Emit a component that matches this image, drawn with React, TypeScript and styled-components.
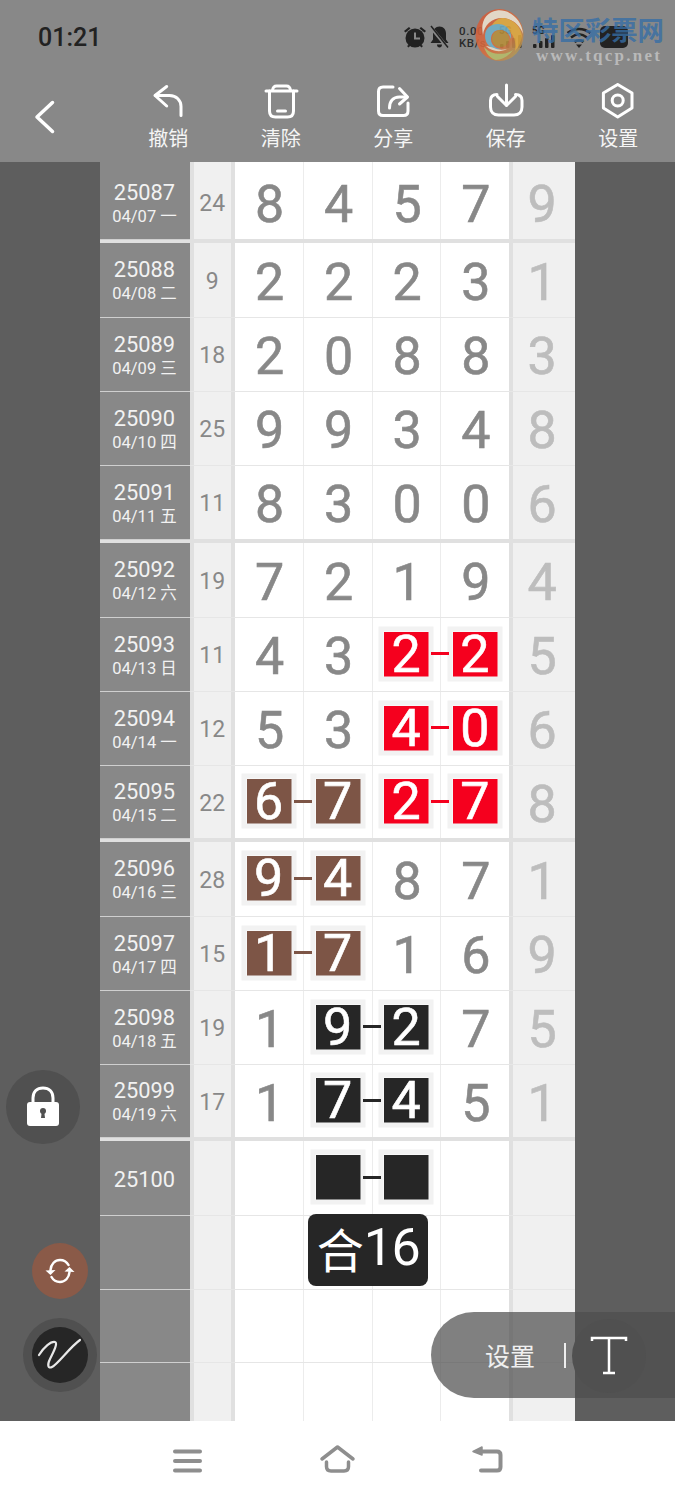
import React from "react";
import styled, { createGlobalStyle } from "styled-components";

const Global = createGlobalStyle`
  html, body { margin: 0; padding: 0; background: #fff; }
  * { box-sizing: border-box; }
  body { font-family: Roboto, "Noto Sans CJK SC", sans-serif; }
`;

const Page = styled.div`
  position: relative;
  width: 675px;
  height: 1500px;
  overflow: hidden;
  display: flex;
  flex-direction: column;
  background: #fff;
`;

const Header = styled.header`
  height: 162px;
  flex: none;
  background: #888888;
  display: flex;
  flex-direction: column;
`;

const StatusBar = styled.div`
  height: 83px;
  flex: none;
  display: flex;
  align-items: flex-start;
  justify-content: space-between;
  padding: 22px 47px 0 38px;
`;

const Time = styled.span`
  font: 500 25px/30px Roboto, sans-serif;
  color: #222;
  margin-top: 1px;
`;

const StatusIcons = styled.div`
  display: flex;
  align-items: center;
  height: 30px;
`;

const Speed = styled.div`
  width: 30px;
  margin: 0 0 0 10px;
  font: 500 11.5px/12px Roboto, sans-serif;
  color: #2a2a2a;
  letter-spacing: 0.6px;
  white-space: nowrap;
`;

const Signal = styled.div<{ $gap: number }>`
  position: relative;
  width: 26px;
  height: 24px;
  margin-left: ${(p) => p.$gap}px;
`;

const SignalTag = styled.span`
  position: absolute;
  left: 0;
  top: 0;
  font: 700 10px/11px Roboto, sans-serif;
  color: #222;
`;

const Toolbar = styled.div`
  display: flex;
  flex: 1;
  align-items: flex-start;
`;

const BackButton = styled.div`
  width: 112px;
  flex: none;
`;

const ToolItem = styled.div`
  width: 112.5px;
  flex: none;
  display: flex;
  flex-direction: column;
  align-items: center;
`;

const ToolLabel = styled.span`
  font: 400 20px/24px "Noto Sans CJK SC", sans-serif;
  color: #f5f5f5;
  margin-top: 6px;
`;

const Body = styled.main`
  height: 1259px;
  flex: none;
  display: flex;
  background: #5e5e5e;
  overflow: hidden;
`;

const Gutter = styled.div`
  width: 100px;
  flex: none;
`;

const Sheet = styled.div`
  width: 475px;
  flex: none;
  display: flex;
  flex-direction: column;
`;

const Row = styled.div<{ $h: number; $end?: boolean }>`
  flex: none;
  height: ${(p) => p.$h}px;
  display: grid;
  grid-template-columns: 90px 44.5px 69px 69px 68px 68.5px 66px;
  border-bottom: ${(p) => (p.$end ? "4px solid #e0e0e0" : "1px solid #e6e6e6")};
`;

const IssueCell = styled.div`
  background: #888888;
  color: #f2f2f2;
  display: flex;
  flex-direction: column;
  align-items: center;
  justify-content: center;
  padding: 2px 1px 0 0;
  box-shadow: 0 1px 0 #cfcfcf;
`;

const IssueNo = styled.span`
  font: 400 21.8px/25px Roboto, sans-serif;
`;

const IssueDate = styled.span`
  font: 400 16.5px/23px Roboto, "Noto Sans CJK SC", sans-serif;
  white-space: nowrap;
`;

const SumCell = styled.div`
  background: #f0f0f0;
  border-left: 4px solid #e0e0e0;
  border-right: 4px solid #e0e0e0;
  color: #888;
  font: 400 23px/1 Roboto, sans-serif;
  display: flex;
  align-items: center;
  justify-content: center;
  padding-top: 2px;
`;

const NumCell = styled.div<{ $last?: boolean }>`
  position: relative;
  background: #fff;
  border-right: ${(p) => (p.$last ? "0" : "1px solid #ececec")};
  color: #888;
  font: 400 52px/1 Roboto, sans-serif;
  -webkit-text-stroke: 0.6px currentColor;
  display: flex;
  align-items: center;
  justify-content: center;
  padding: 5px 0 0 2px;
`;

const TailCell = styled.div`
  background: #f0f0f0;
  border-left: 4px solid #e0e0e0;
  color: #bdbdbd;
  font: 400 52px/1 Roboto, sans-serif;
  -webkit-text-stroke: 0.6px currentColor;
  display: flex;
  align-items: center;
  justify-content: center;
  padding: 5px 4px 0 0;
`;

const Mark = styled.div<{ $c: string }>`
  position: absolute;
  left: 50%;
  top: calc(50% - 1px);
  transform: translate(-50%, -50%);
  width: 55px;
  height: 55px;
  border: 5px solid #f2f2f2;
  background: ${(p) => p.$c};
  background-clip: padding-box;
  color: #fff;
  font: 400 52px/46px Roboto, sans-serif;
  -webkit-text-stroke: 0.6px currentColor;
  text-align: center;
`;

const Link = styled.div<{ $c: string }>`
  position: absolute;
  z-index: 2;
  right: -9.5px;
  top: calc(50% - 2.5px);
  width: 18px;
  height: 3px;
  background: ${(p) => p.$c};
`;

const Badge = styled.div`
  position: absolute;
  left: 308px;
  top: 1214px;
  width: 120px;
  height: 72px;
  border-radius: 8px;
  background: #262626;
  color: #fff;
  display: flex;
  align-items: center;
  justify-content: center;
  padding-bottom: 5px;
  font: 400 52px/1 Roboto, "Noto Sans CJK SC", sans-serif;
  letter-spacing: -1.5px;
`;

const BadgeHan = styled.span`
  font: 400 47px/1 "Noto Sans CJK SC", sans-serif;
  letter-spacing: 0;
`;

const RoundBtn = styled.div<{ $x: number; $y: number; $r: number; $c: string }>`
  position: absolute;
  left: ${(p) => p.$x - p.$r}px;
  top: ${(p) => p.$y - p.$r}px;
  width: ${(p) => p.$r * 2}px;
  height: ${(p) => p.$r * 2}px;
  border-radius: 50%;
  background: ${(p) => p.$c};
  display: flex;
  align-items: center;
  justify-content: center;
`;

const Pill = styled.div`
  position: absolute;
  left: 431px;
  top: 1312px;
  width: 244px;
  height: 86px;
  border-radius: 43px 0 0 43px;
  background: rgba(77, 77, 77, 0.714);
  display: flex;
  align-items: center;
  padding-left: 54px;
`;

const PillText = styled.span`
  font: 400 25px/30px "Noto Sans CJK SC", sans-serif;
  color: #f0f0f0;
  white-space: nowrap;
`;

const PillDivider = styled.div`
  width: 2px;
  height: 25px;
  background: #eee;
  margin-left: 29px;
`;

const NavBar = styled.nav`
  height: 79px;
  flex: none;
  background: #fff;
  display: flex;
  align-items: flex-start;
  padding: 20px 0 0 165px;
  gap: 100px;
`;

const Watermark = styled.div`
  position: absolute;
  left: 475px;
  top: 9px;
  width: 195px;
  height: 56px;
  display: flex;
  pointer-events: none;
`;

const LogoMark = styled.svg`
  flex: none;
  opacity: 0.88;
`;

const WatermarkText = styled.div`
  margin-left: 9px;
  display: flex;
  flex-direction: column;
`;

const WatermarkName = styled.span`
  font: 700 26.4px/30px "Noto Sans CJK SC", sans-serif;
  color: rgba(54, 110, 166, 0.8);
  margin: 5px 0 0 -1px;
  white-space: nowrap;
`;

const WatermarkUrl = styled.span`
  font: 700 17px/18px "Liberation Serif", serif;
  color: #b9b9b9;
  letter-spacing: 2.25px;
  margin: 3px 0 0 3px;
  white-space: nowrap;
`;

type N = number | string;
type Mk = { at: number; to?: boolean; c: string };

type RowData = {
  no: string;
  date?: string;
  sum?: number;
  d?: N[];
  tail?: number;
  end?: boolean;
  h: number;
  marks?: Mk[];
};

const RED = "#f5001e";
const BROWN = "#7d5546";
const BLACK = "#262626";

const rows: RowData[] = [
  { no: "25087", date: "04/07 一", sum: 24, d: [8, 4, 5, 7], tail: 9, end: true, h: 77 },
  { no: "25088", date: "04/08 二", sum: 9, d: [2, 2, 2, 3], tail: 1, h: 75 },
  { no: "25089", date: "04/09 三", sum: 18, d: [2, 0, 8, 8], tail: 3, h: 74 },
  { no: "25090", date: "04/10 四", sum: 25, d: [9, 9, 3, 4], tail: 8, h: 74 },
  { no: "25091", date: "04/11 五", sum: 11, d: [8, 3, 0, 0], tail: 6, end: true, h: 77 },
  { no: "25092", date: "04/12 六", sum: 19, d: [7, 2, 1, 9], tail: 4, h: 75 },
  { no: "25093", date: "04/13 日", sum: 11, d: [4, 3, 2, 2], tail: 5, h: 74, marks: [{ at: 2, to: true, c: RED }, { at: 3, c: RED }] },
  { no: "25094", date: "04/14 一", sum: 12, d: [5, 3, 4, 0], tail: 6, h: 74, marks: [{ at: 2, to: true, c: RED }, { at: 3, c: RED }] },
  {
    no: "25095", date: "04/15 二", sum: 22, d: [6, 7, 2, 7], tail: 8, end: true, h: 76,
    marks: [{ at: 0, to: true, c: BROWN }, { at: 1, c: BROWN }, { at: 2, to: true, c: RED }, { at: 3, c: RED }],
  },
  { no: "25096", date: "04/16 三", sum: 28, d: [9, 4, 8, 7], tail: 1, h: 75, marks: [{ at: 0, to: true, c: BROWN }, { at: 1, c: BROWN }] },
  { no: "25097", date: "04/17 四", sum: 15, d: [1, 7, 1, 6], tail: 9, h: 74, marks: [{ at: 0, to: true, c: BROWN }, { at: 1, c: BROWN }] },
  { no: "25098", date: "04/18 五", sum: 19, d: [1, 9, 2, 7], tail: 5, h: 74, marks: [{ at: 1, to: true, c: BLACK }, { at: 2, c: BLACK }] },
  { no: "25099", date: "04/19 六", sum: 17, d: [1, 7, 4, 5], tail: 1, end: true, h: 76, marks: [{ at: 1, to: true, c: BLACK }, { at: 2, c: BLACK }] },
  { no: "25100", d: ["", "", "", ""], h: 75, marks: [{ at: 1, to: true, c: BLACK }, { at: 2, c: BLACK }] },
  { no: "", d: ["", "", "", ""], h: 74 },
  { no: "", d: ["", "", "", ""], h: 73 },
  { no: "", d: ["", "", "", ""], h: 74 },
];

const StrokeIcon = styled.svg`
  display: block;
  fill: none;
  stroke: #fff;
  stroke-width: 3;
  stroke-linecap: round;
  stroke-linejoin: round;
`;

const NavIcon = styled.svg`
  display: block;
  fill: none;
  stroke: #8e8e8e;
  stroke-width: 4;
  stroke-linecap: round;
  stroke-linejoin: round;
`;

const tools: { label: string; icon: React.ReactNode }[] = [
  {
    label: "撤销",
    icon: (
      <StrokeIcon width="40" height="37" viewBox="148 83 40 37">
        <path d="M166.7 86.500 155 95.500l11.700 10.500" />
        <path d="M155.500 95.500h14c7 0 11.500 5 11.500 11v9" />
      </StrokeIcon>
    ),
  },
  {
    label: "清除",
    icon: (
      <StrokeIcon width="40" height="37" viewBox="261 83 40 37">
        <path d="M266 91h31" />
        <path d="M272.500 90.500c.5-3.500 1.500-4.500 4-4.500h10c2.500 0 3.500 1 4 4.500" />
        <path d="M269.500 91v20c0 4 2 6 6 6h12c4 0 6-2 6-6V91" />
        <path d="M277.500 111h8" />
      </StrokeIcon>
    ),
  },
  {
    label: "分享",
    icon: (
      <StrokeIcon width="40" height="37" viewBox="374 83 40 37">
        <path d="M394 87h-10c-3 0-4.500 1.500-4.500 4.500v19.500c0 3 1.500 4.500 4.500 4.500h20.500c3 0 4.500-1.500 4.500-4.500v-8" />
        <path d="M390.500 108c0-6.500 3.500-11 10-11h7.500" />
        <path d="M400.500 88.500 408.500 97l-8 7" />
      </StrokeIcon>
    ),
  },
  {
    label: "保存",
    icon: (
      <StrokeIcon width="40" height="37" viewBox="486 83 40 37">
        <path d="M497 94.500c-4.500 0-6.500 2.500-6.500 6v6.500c0 5 3 8 8 8h15.500c5 0 8-3 8-8v-6.500c0-3.500-2-6-6.500-6" />
        <path d="M506.500 85v20" />
        <path d="m497.500 96.500 9 9 9-9" />
      </StrokeIcon>
    ),
  },
  {
    label: "设置",
    icon: (
      <StrokeIcon width="40" height="37" viewBox="599 83 40 37">
        <path d="M618.700 84.500 633 93v15l-14.300 9-14.300-9V93z" />
        <circle cx="618.700" cy="100.500" r="5.500" />
      </StrokeIcon>
    ),
  },
];

export default function App() {
  return (
    <Page>
      <Global />
      <Header>
        <StatusBar>
          <Time>01:21</Time>
          <StatusIcons>
            <svg width="24" height="24" viewBox="0 0 24 24" fill="#222">
              <circle cx="12" cy="13" r="9.500" />
              <path d="M1 6l5-4 1.500 1.500-5 4zM23 6l-5-4-1.500 1.500 5 4zM4 21l3-2 1 1-2.500 2.500zM20 21l-3-2-1 1 2.500 2.500z" />
              <path d="M12 7.500V13.500h5" fill="none" stroke="#888" strokeWidth="2" />
            </svg>
            <svg width="19" height="24" viewBox="0 0 19 24" style={{ marginLeft: 3 }} fill="#222">
              <path d="M9.500 1.500c-4 0-6.500 3-6.500 7v6L.5 18h18L16 14.500v-6c0-4-2.500-7-6.500-7zM7 19.500h5c0 2-1 3-2.500 3S7 21.500 7 19.500z" />
              <path d="M1 2.500 17 22" stroke="#888" strokeWidth="3.500" />
              <path d="M1 1 18 22.500" stroke="#222" strokeWidth="1.500" />
            </svg>
            <Speed>
              0.00
              <br />
              KB/s
            </Speed>
            <Signal $gap={10}>
              <SignalTag>5G</SignalTag>
              <svg width="26" height="24" viewBox="0 0 26 24" fill="#222">
                <rect x="1" y="19" width="3.500" height="4" rx="1" />
                <rect x="7" y="16" width="3.500" height="7" rx="1" />
                <rect x="13" y="13" width="3.500" height="10" rx="1" />
                <rect x="19" y="10" width="3.500" height="13" rx="1" />
              </svg>
            </Signal>
            <Signal $gap={7}>
              <SignalTag>5G</SignalTag>
              <svg width="26" height="24" viewBox="0 0 26 24" fill="#222">
                <rect x="1" y="19" width="3.500" height="4" rx="1" />
                <rect x="7" y="16" width="3.500" height="7" rx="1" />
                <rect x="13" y="13" width="3.500" height="10" rx="1" />
                <rect x="19" y="10" width="3.500" height="13" rx="1" />
              </svg>
            </Signal>
            <svg width="26" height="24" viewBox="0 0 26 24" fill="none" stroke="#222" strokeWidth="2.500" style={{ marginLeft: 8 }}>
              <path d="M1.500 8c7-5.500 16-5.500 23 0M5 12.500c5-4 11-4 16 0M8.500 17c3-2.200 6-2.200 9 0" />
              <path d="M13 23l-3-3.500h6z" fill="#222" stroke="none" />
            </svg>
            <svg width="28" height="22" viewBox="0 0 28 22" style={{ marginLeft: 8 }}>
              <rect x="0" y="0" width="28" height="22" rx="5" fill="#222" />
            </svg>
          </StatusIcons>
        </StatusBar>
        <Toolbar>
          <BackButton>
            <StrokeIcon width="112" height="60" viewBox="0 83 112 60" style={{ strokeWidth: 3.5 }}>
              <path d="M52.500 102.500 37 117l15.500 14.500" />
            </StrokeIcon>
          </BackButton>
          {tools.map((t) => (
            <ToolItem key={t.label}>
              {t.icon}
              <ToolLabel>{t.label}</ToolLabel>
            </ToolItem>
          ))}
        </Toolbar>
      </Header>

      <Body>
        <Gutter />
        <Sheet>
          <Row $h={4}>
            <IssueCell />
            <SumCell />
            <NumCell />
            <NumCell />
            <NumCell />
            <NumCell $last />
            <TailCell />
          </Row>
          {rows.map((r, i) => (
            <Row key={i} $h={r.h} $end={r.end}>
              <IssueCell>
                {r.no && <IssueNo>{r.no}</IssueNo>}
                {r.date && <IssueDate>{r.date}</IssueDate>}
              </IssueCell>
              <SumCell>{r.sum}</SumCell>
              {(r.d ?? []).map((v, k) => {
                const m = r.marks?.find((x) => x.at === k);
                return (
                  <NumCell key={k} $last={k === 3}>
                    {m ? (
                      <>
                        <Mark $c={m.c}>{v}</Mark>
                        {m.to && <Link $c={m.c} />}
                      </>
                    ) : (
                      v
                    )}
                  </NumCell>
                );
              })}
              <TailCell>{r.tail}</TailCell>
            </Row>
          ))}
        </Sheet>
        <Gutter />
      </Body>

      <NavBar>
        <NavIcon width="40" height="40" viewBox="165 1441 40 40">
          <path d="M175 1451.500h25M175 1461h25M175 1470.500h25" />
        </NavIcon>
        <NavIcon width="40" height="40" viewBox="317 1441 40 40" style={{ strokeWidth: 3.5, marginLeft: 12 }}>
          <path d="M322 1459l15.500-12 15.500 12" />
          <path d="M326.500 1462v4.500c0 3 1.500 4.500 4.500 4.500h13c3 0 4.500-1.500 4.500-4.500v-4.500" />
        </NavIcon>
        <NavIcon width="40" height="40" viewBox="467 1441 40 40" style={{ marginLeft: 10 }}>
          <path d="M481 1451.500h16c2.500 0 3.500 1 3.500 3.500v12c0 2.500-1 3.500-3.500 3.500h-16" />
          <path d="M473 1451.500l9-4.500v8z" fill="#8e8e8e" stroke="#8e8e8e" strokeWidth="1.500" />
        </NavIcon>
      </NavBar>

      <Watermark>
        <LogoMark width="49" height="52" viewBox="0 0 49 52">
          <defs>
            <linearGradient id="sw" x1="0" y1="0" x2="1" y2="1">
              <stop offset="0" stopColor="#d2573a" />
              <stop offset="0.6" stopColor="#d9703f" />
              <stop offset="1" stopColor="#9fae62" />
            </linearGradient>
          </defs>
          <ellipse cx="24.500" cy="26" rx="24" ry="26" fill="url(#sw)" />
          <path d="M22 1.500C34 0 47 10 48 25c-3-9-11-16-21-16C17 9 9 16 8 26 5 13 11 3 22 1.500z" fill="#efe3d0" />
          <path d="M27 9c11 0 19 9 20 18-1 6-3 11-7 15 2-11-3-22-15-24-4 0-7 1-10 3 2-7 6-11 12-12z" fill="#e3a93e" />
          <path d="M10 27c0-8 6-12 13-12 9 0 14 7 13 15-2-6-6-9-11-9-6 0-9 4-9 9 0 6 5 10 11 10-9 2-17-4-17-13z" fill="#6fb0c8" />
          <path d="M25 21c5 0 9 4 9 9s-4 8-8 8c-5 0-9-3-9-8s3-9 8-9z" fill="#b88f3a" />
          <path d="M9 38c7 8 20 9 29 3-5 7-11 10-17 10-5-1-10-6-12-13z" fill="#b7bd6a" />
          <path d="M11 37c5 5 14 7 21 3-5 1-9 1-13-1-3-1-6-2-8-2z" fill="#e9ddc8" />
        </LogoMark>
        <WatermarkText>
          <WatermarkName>特区彩票网</WatermarkName>
          <WatermarkUrl>www.tqcp.net</WatermarkUrl>
        </WatermarkText>
      </Watermark>

      <RoundBtn $x={43} $y={1107} $r={37} $c="#505050">
        <svg width="36" height="44" viewBox="0 0 36 44">
          <path d="M8 18V13C8 6.500 12 3 18 3s10 3.500 10 10v5" fill="none" stroke="#fff" strokeWidth="3" />
          <path d="M5 17h26a3 3 0 0 1 3 3v18a3 3 0 0 1-3 3H5a3 3 0 0 1-3-3V20a3 3 0 0 1 3-3z" fill="#fff" />
          <circle cx="18" cy="26" r="3" fill="#505050" />
          <path d="M16.700 27h2.600l.7 6h-4z" fill="#505050" />
        </svg>
      </RoundBtn>

      <RoundBtn $x={60} $y={1271} $r={28} $c="#8a5a48">
        <svg width="32" height="28" viewBox="0 0 32 28" fill="none" stroke="#fff" strokeWidth="2.500" strokeLinecap="round">
          <path d="M6.500 13C7 7 11 3 16 3c3.500 0 6.500 1.500 8.500 5" />
          <path d="M25.500 15c-.5 6-4.500 10-9.500 10-3.500 0-6.500-1.500-8.500-5" />
          <path d="M1.500 13.500 6.500 18l5-5z" fill="#fff" stroke="none" />
          <path d="M20.500 14.500 25.500 10l5 5z" fill="#fff" stroke="none" />
        </svg>
      </RoundBtn>

      <RoundBtn $x={60} $y={1355} $r={37} $c="#505050">
        <RoundBtn $x={37} $y={37} $r={28} $c="#262626">
          <svg width="46" height="36" viewBox="0 0 46 36" fill="none" stroke="#e8e8e8" strokeWidth="2.200" strokeLinecap="round">
            <path d="M2 18C7 10 14 4 18 5c3 1-1 9-5 17-3 6-2 10 2 8 6-3 18-20 28-27" />
          </svg>
        </RoundBtn>
      </RoundBtn>

      <Badge>
        <BadgeHan>合</BadgeHan>16
      </Badge>

      <Pill>
        <PillText>设置</PillText>
        <PillDivider />
      </Pill>

      <RoundBtn $x={609} $y={1356} $r={37} $c="#505050">
        <svg width="38" height="40" viewBox="0 0 38 40" fill="none" stroke="#fff" strokeWidth="2.500">
          <path d="M2 5V2h34v3M19 2v35M13 37h12" />
        </svg>
      </RoundBtn>
    </Page>
  );
}
